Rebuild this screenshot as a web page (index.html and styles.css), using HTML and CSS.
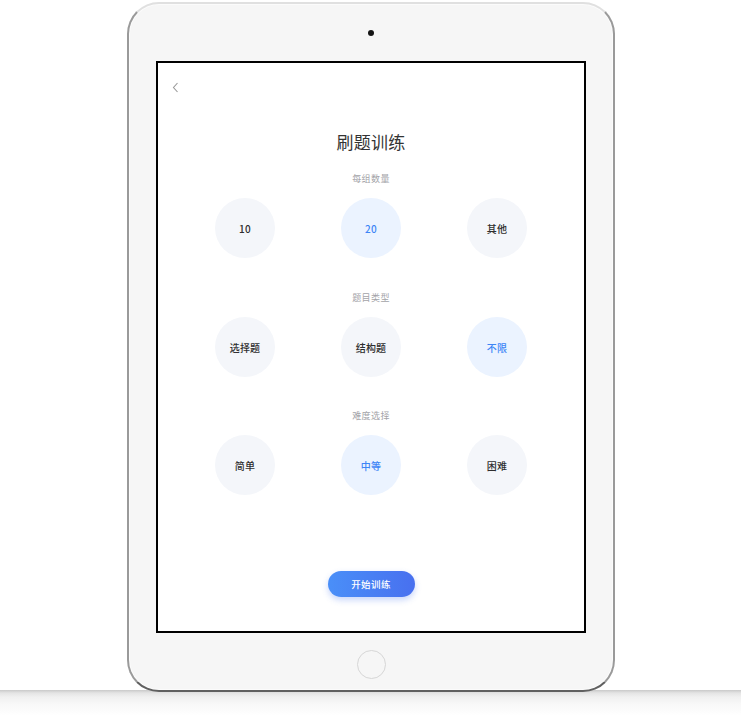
FILE: index.html
```html
<!DOCTYPE html>
<html lang="zh">
<head>
<meta charset="utf-8">
<title>刷题训练</title>
<link rel="stylesheet" href="styles.css">
</head>
<body>
<div class="stage">
  <div class="device">
    <div class="bezel-top"><span class="camera"></span></div>
    <div class="screen">
      <div class="topbar">
        <svg class="back" width="7" height="11" viewBox="0 0 7 11"><polyline points="5.5,1 1.5,5.5 5.5,10" fill="none" stroke="#9a9a9a" stroke-width="1.1"/></svg>
      </div>
      <h1 class="title">刷题训练</h1>
      <section class="group">
        <div class="label">每组数量</div>
        <div class="options">
          <div class="opt">10</div>
          <div class="opt on">20</div>
          <div class="opt">其他</div>
        </div>
      </section>
      <section class="group">
        <div class="label">题目类型</div>
        <div class="options">
          <div class="opt">选择题</div>
          <div class="opt">结构题</div>
          <div class="opt on">不限</div>
        </div>
      </section>
      <section class="group">
        <div class="label">难度选择</div>
        <div class="options">
          <div class="opt">简单</div>
          <div class="opt on">中等</div>
          <div class="opt">困难</div>
        </div>
      </section>
      <button class="start">开始训练</button>
    </div>
    <div class="bezel-bottom"><span class="home"></span></div>
  </div>
  <div class="floor"></div>
</div>
</body>
</html>
```
FILE: styles.css
```css
html, body {
  margin: 0;
  padding: 0;
  background: #ffffff;
  font-family: "Noto Sans CJK SC", "Noto Sans", sans-serif;
}
.stage {
  padding-top: 2px;
  width: 741px;
  height: 719px;
  overflow: hidden;
}
.device {
  width: 488px;
  height: 690px;
  margin-left: 127px;
  box-sizing: border-box;
  border: 2px solid #9a9a9a;
  border-top-color: #e0e0e0;
  border-bottom-color: #606060;
  border-radius: 32px;
  background: #f6f6f6;
  padding: 0 27px;
  display: flex;
  flex-direction: column;
  position: relative;
  z-index: 1;
  box-shadow: inset 0 0 0 1px #fbfbfb;
}
.bezel-top {
  height: 57px;
  display: flex;
  align-items: center;
  justify-content: center;
}
.camera {
  width: 6px;
  height: 6px;
  border-radius: 50%;
  background: #141414;
}
.screen {
  width: 430px;
  height: 572px;
  box-sizing: border-box;
  border: 2px solid #000;
  background: #fff;
  display: flex;
  flex-direction: column;
  align-items: center;
  padding-bottom: 34px;
}
.topbar {
  align-self: stretch;
  height: 30px;
  padding: 19px 0 0 14px;
  box-sizing: border-box;
}
.back { display: block; }
.title {
  margin: 37px 0 0;
  font-size: 17px;
  line-height: 24px;
  font-weight: 400;
  color: #333;
  letter-spacing: 0.3px;
}
.group {
  display: flex;
  flex-direction: column;
  align-items: center;
  margin-top: 19px;
}
.group + .group { margin-top: 34px; }
.group + .group + .group { margin-top: 33px; }
.label {
  font-size: 9px;
  line-height: 12px;
  color: #a3a3a8;
  letter-spacing: 0.4px;
}
.options {
  margin-top: 13px;
  display: grid;
  grid-template-columns: repeat(3, 60px);
  column-gap: 66px;
}
.opt {
  width: 60px;
  height: 60px;
  border-radius: 50%;
  background: #f4f6fa;
  display: flex;
  align-items: center;
  justify-content: center;
  font-size: 10px;
  font-weight: 500;
  color: #2e2e2e;
  letter-spacing: 0.2px;
}
.opt.on {
  background: #ebf3ff;
  color: #3d85f6;
}
.start {
  margin-top: auto;
  width: 87px;
  height: 26px;
  border: none;
  border-radius: 13px;
  background: linear-gradient(90deg, #4a8ff8, #4870ef);
  box-shadow: 0 3px 6px rgba(70, 115, 240, 0.3);
  color: #fff;
  font-family: inherit;
  font-size: 9.5px;
  font-weight: 500;
  letter-spacing: 0.4px;
  padding: 0;
}
.bezel-bottom {
  flex: 1;
  display: flex;
  align-items: center;
  justify-content: center;
  padding-top: 5px;
}
.home {
  width: 27px;
  height: 27px;
  border-radius: 50%;
  border: 1.2px solid #d6d6d6;
}
.floor {
  height: 26px;
  margin-top: -2px;
  background: linear-gradient(180deg, #c9c9c9 0px, #e4e4e4 3px, #f0f0f0 7px, #f8f8f8 14px, #ffffff 26px);
}
```
